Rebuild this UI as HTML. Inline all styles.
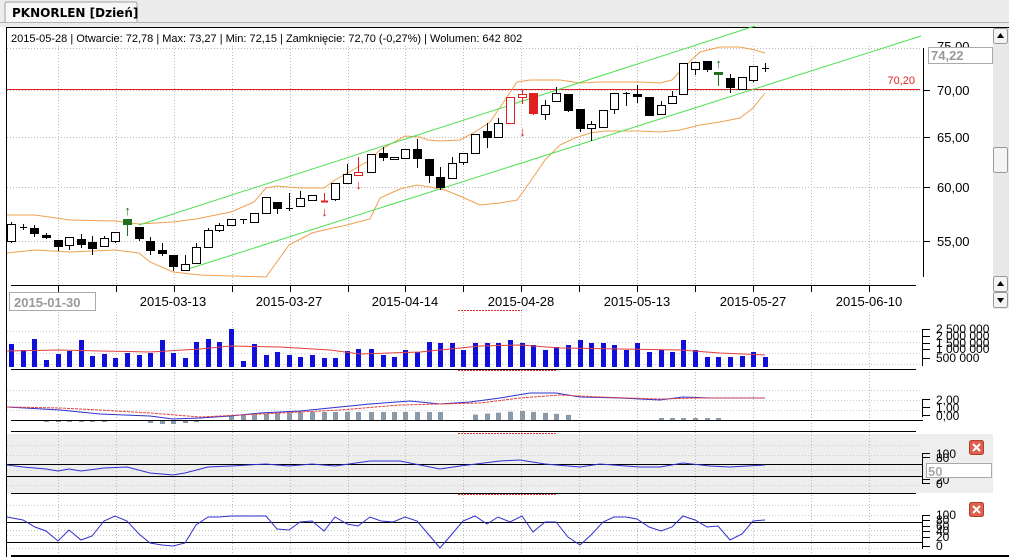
<!DOCTYPE html>
<html><head><meta charset="utf-8"><style>
html,body{margin:0;padding:0;width:1009px;height:557px;overflow:hidden;background:#fff;font-family:"Liberation Sans",sans-serif}
svg{position:absolute;left:0;top:0}
</style></head><body>
<svg id="s" width="1009" height="557" xmlns="http://www.w3.org/2000/svg" font-family="Liberation Sans, sans-serif">
<rect x="0" y="0" width="1009" height="27" fill="#ececec"/>
<path d="M5 22 V4 Q5 2 7 2 H135 Q137 2 137 4 V22" fill="#f7f7f7" stroke="#a0a0a0"/>
<text x="12" y="17" font-size="12" font-weight="bold" fill="#000" font-family="DejaVu Sans, sans-serif">PKNORLEN [Dzień]</text>
<line x1="0" y1="22.5" x2="1009" y2="22.5" stroke="#b0b0b0"/>
<rect x="6.5" y="27.5" width="1003" height="530" fill="#fff" stroke="#000"/>
<rect x="993" y="28" width="16" height="281" fill="#e8e8e8"/>
<rect x="7" y="434" width="986" height="59" fill="#eeeeee"/>
<g id="g"></g>
<text x="11" y="42" font-size="11" fill="#000">2015-05-28 | Otwarcie: 72,78 | Max: 73,27 | Min: 72,15 | Zamknięcie: 72,70 (-0,27%)  | Wolumen: 642 802</text>
</svg>
<script>
var g=document.getElementById('g'),h='';
function L(x1,y1,x2,y2,c,w,d){h+='<line x1="'+x1+'" y1="'+y1+'" x2="'+x2+'" y2="'+y2+'" stroke="'+c+'" stroke-width="'+(w||1)+'"'+(d?' stroke-dasharray="'+d+'"':'')+'/>';}
function P(pts,c,w,d){h+='<polyline fill="none" points="'+pts.map(p=>p.join(',')).join(' ')+'" stroke="'+c+'" stroke-width="'+(w||1)+'"'+(d?' stroke-dasharray="'+d+'"':'')+'/>';}
function T(x,y,t,s,c,a,b){h+='<text x="'+x+'" y="'+y+'" font-size="'+s+'" fill="'+(c||'#000')+'"'+(a?' text-anchor="'+a+'"':'')+(b?' font-weight="bold"':'')+'>'+t+'</text>';}
for(var x=58;x<920;x+=57.9){var xx=Math.round(x)+.5;L(xx,46,xx,284,'#bbb',1,'1 2');L(xx,312,xx,556,'#bbb',1,'1 2');}
[48,90,137,187,241].forEach(y=>L(7,y+.5,920,y+.5,'#bbb',1,'1 2'));
[331,342,353,364,390,400,410,445,455,470,485,505,515,530,535,548].forEach(y=>L(7,y+.5,920,y+.5,'#ccc',1,'1 2'));
L(7,89.5,920,89.5,'#e02020');T(915,84,'70,20',11,'#e02020','end');
L(923.5,48,923.5,277,'#000');
[[90,'70,00'],[137,'65,00'],[187,'60,00'],[241,'55,00']].forEach(a=>{L(923,a[0]+.5,930,a[0]+.5,'#000');T(937,a[0]+5,a[1],13);});
T(937,51,'75,00',13);
h+='<rect x="928.5" y="47.5" width="64" height="16" fill="#fff" stroke="#aaa"/>';T(931,60,'74,22',13,'#999',null,1);
L(11,285.5,916,285.5,'#000');
for(var x=58;x<920;x+=57.9)L(Math.round(x)+.5,285,Math.round(x)+.5,292,'#000');
h+='<rect x="9.5" y="292.5" width="86" height="18" fill="#fff" stroke="#aaa"/>';T(14,307,'2015-01-30',13,'#999',null,1);
[[173,'2015-03-13'],[289,'2015-03-27'],[405,'2015-04-14'],[521,'2015-04-28'],[637,'2015-05-13'],[753,'2015-05-27'],[869,'2015-06-10']].forEach(a=>T(a[0],306,a[1],13,'#000','middle'));
[310,370,433,494].forEach((y,i)=>L(458,y+.5,i?556:522,y+.5,'#e03030',1,'2 1'));
P([[7,215],[35,215],[70,220],[115,221],[139,224],[173,222],[196,219],[231,212],[254,202],[266,188],[277,186],[300,188],[324,188],[335,180],[358,167],[370,160],[380,150],[405,136],[420,137],[428,140],[440,141],[460,140],[475,132],[490,122],[505,100],[517,82],[530,80],[560,80],[580,83],[600,82],[640,82],[660,83],[672,80],[683,68],[700,52],[720,47],[740,47],[755,50],[765,53]],'#f0a050');
P([[7,253],[35,250],[70,252],[115,250],[139,253],[150,262],[173,272],[200,275],[231,276],[266,277],[289,245],[312,233],[324,230],[347,225],[358,222],[370,219],[380,198],[400,189],[417,185],[430,187],[445,190],[462,197],[480,205],[500,203],[517,200],[530,182],[545,160],[560,145],[575,138],[590,133],[605,131],[640,131],[660,132],[680,130],[700,125],[720,122],[740,118],[753,108],[765,93]],'#f0a050');
L(139,225,755,26,'#50e050');L(185,270,921,36,'#50e050');
var C=[[11,224,241,222,243,'w'],[23,227,227,224,230,'c'],[34,228,233,225,237,'b'],[46,235,237,233,239,'b'],[58,240,246,240,251,'b'],[69,237,245,237,250,'w'],[81,239,244,234,248,'b'],[92,242,248,236,255,'b'],[104,238,246,236,246,'w'],[115,232,241,232,243,'w'],[127,219,224,219,236,'g'],[139,227,238,227,241,'b'],[150,241,250,237,255,'b'],[162,250,253,243,256,'b'],[173,255,266,255,271,'b'],[185,264,270,255,270,'w'],[196,247,263,243,263,'w'],[208,230,247,228,247,'w'],[219,225,230,223,232,'w'],[231,219,225,219,225,'w'],[243,219,219,219,224,'c'],[254,213,222,213,222,'w'],[266,197,213,197,213,'w'],[277,202,208,202,214,'b'],[289,208,208,193,211,'c'],[300,198,206,191,206,'w'],[312,195,200,195,201,'w'],[324,201,201,193,202,'rc'],[335,183,199,183,201,'w'],[347,174,183,164,183,'w'],[358,172,175,157,175,'r'],[371,154,172,154,172,'w'],[383,153,157,147,161,'b'],[394,157,159,157,159,'w'],[405,149,158,149,158,'w'],[417,149,158,139,168,'b'],[429,159,175,159,183,'b'],[440,177,187,167,190,'b'],[452,163,178,157,178,'w'],[463,153,162,153,165,'w'],[475,134,153,134,153,'w'],[487,131,137,123,148,'b'],[498,123,137,118,137,'w'],[510,97,123,97,123,'r'],[522,94,97,89,104,'r'],[533,93,113,93,115,'R'],[545,105,114,100,120,'w'],[556,93,101,87,101,'w'],[568,94,110,94,112,'b'],[580,109,128,109,132,'b'],[591,124,128,121,141,'w'],[603,110,127,110,127,'w'],[614,93,109,93,114,'w'],[626,93,93,92,106,'c'],[637,94,96,85,103,'b'],[649,97,115,97,115,'b'],[661,105,114,101,114,'w'],[672,96,103,91,103,'w'],[683,63,94,63,94,'w'],[695,62,69,62,75,'w'],[707,61,69,61,72,'b'],[718,72,74,72,86,'g'],[730,78,87,74,93,'b'],[742,77,89,77,90,'w'],[753,66,80,66,82,'w'],[765,68,68,63,72,'c']];
C.forEach(c=>{var x=c[0],t=c[5],col=t=='g'?'#207020':(t=='r'||t=='R'||t=='rc')?'#e02020':'#000';
 L(x+.5,c[3],x+.5,c[4],col);
 if(t=='c'||t=='rc'){L(x-3,c[1]+.5,x+4,c[1]+.5,col,t=='rc'?2:1);}
 else{var fill=(t=='b')?'#000':t=='R'?'#e02020':t=='g'?'#207020':'#fff';h+='<rect x="'+(x-3.5)+'" y="'+(c[1]+.5)+'" width="8" height="'+Math.max(1,c[2]-c[1])+'" fill="'+fill+'" stroke="'+col+'"/>';}
});
[[127,215,'↑','#207020'],[718,68,'↑','#207020'],[324,216,'↓','#e02020'],[358,189,'↓','#e02020'],[522,136,'↓','#e02020']].forEach(a=>T(a[0]+.5,a[1],a[2],13,a[3],'middle'));
var V=[344,350,339,360,354,351,340,356,354,358,353,355,353,340,353,358,342,339,342,329,361,344,355,352,355,357,355,358,358,351,349,349,355,357,350,352,342,343,343,350,343,343,343,340,343,345,350,347,345,340,343,343,345,350,343,352,350,352,340,350,357,357,357,356,352,357];
V.forEach((v,i)=>{var x=C[i][0];h+='<rect x="'+(x-2)+'" y="'+v+'" width="5" height="'+(367-v)+'" fill="#1010d8"/>';});
P([[7,351],[60,350],[100,351],[150,352],[200,349],[231,346],[280,347],[330,350],[360,354],[420,352],[480,346],[520,345],[560,348],[620,349],[680,350],[720,353],[765,355]],'#e04040');
L(11,369.5,916,369.5,'#000');
[[333,'2 500 000'],[340,'2 000 000'],[347,'1 500 000'],[353,'1 000 000'],[362,'500 000']].forEach(a=>{L(922,a[0]-3.5,930,a[0]-3.5,'#000');T(936,a[0],a[1],12);});
L(922.5,330,922.5,366,'#000');
[[46,422],[58,422],[69,422],[81,422],[92,422],[104,422],[150,423],[162,424],[173,424],[185,423],[196,422]].forEach(a=>h+='<rect x="'+(a[0]-2)+'" y="420" width="5" height="'+(a[1]-420)+'" fill="#8a9aa8"/>');
C.forEach((c,i)=>{var x=c[0],v=0;if(x>=225&&x<=445)v=4+Math.min(4,(x-225)/20);if(x>=470&&x<=570)v=5+(x<520?(x-470)/12:(570-x)/12);if(x>=650&&x<=720)v=2;if(v)h+='<rect x="'+(x-2)+'" y="'+(420-v)+'" width="5" height="'+v+'" fill="#8a9aa8"/>';});
P([[7,407],[60,410],[100,414],[150,416],[173,419],[200,418],[230,416],[260,413],[300,411],[340,407],[370,404],[410,401],[440,404],[470,402],[500,398],[530,393],[556,393],[580,397],[620,398],[660,400],[683,397],[710,398],[765,398]],'#3030d0');
P([[7,407],[60,408],[100,410],[150,413],[200,417],[260,414],[340,410],[400,405],[440,404],[480,403],[520,398],[560,395],[600,397],[660,399],[700,398],[765,398]],'#e04040',1,'3 1');
L(11,420.5,923,420.5,'#000');L(11,431.5,916,431.5,'#000');
[[403,'2,00'],[411,'1,00'],[419,'0,00']].forEach(a=>{L(922,a[0]-3.5,930,a[0]-3.5,'#000');T(936,a[0]+1,a[1],12);});
L(922.5,399,922.5,417,'#000');
L(7,464.5,923,464.5,'#000');L(7,476.5,923,476.5,'#000');L(11,493.5,916,493.5,'#000');
P([[7,465],[23,467],[46,469],[58,471],[69,469],[81,471],[104,468],[127,467],[150,473],[173,475],[185,473],[208,467],[231,466],[266,464],[289,466],[312,464],[335,466],[370,461],[400,461],[430,467],[440,469],[460,466],[500,461],[520,460],[545,464],[580,467],[600,464],[640,467],[660,467],[683,463],[710,466],[730,467],[765,465]],'#3030d0');
L(922.5,453,922.5,484,'#000');
[[458,'100'],[462,'80'],[484,'20'],[488,'0']].forEach(a=>{L(922,a[0]-4.5,930,a[0]-4.5,'#000');T(936,a[0],a[1],12);});
h+='<rect x="926.5" y="463.5" width="65" height="14" fill="#fff" stroke="#aaa"/>';T(928,476,'50',13,'#aaa',null,1);
L(7,522.5,923,522.5,'#000');L(7,542.5,923,542.5,'#000');L(11,556,1009,556,'#000',2);
P([[7,517],[23,520],[35,527],[46,531],[58,541],[69,530],[81,540],[92,536],[104,521],[115,516],[127,521],[139,534],[150,543],[162,545],[173,546],[185,543],[196,525],[208,517],[219,517],[231,516],[266,516],[277,529],[289,530],[300,522],[312,521],[324,531],[335,517],[347,524],[358,526],[370,517],[381,521],[393,522],[405,517],[417,521],[429,535],[440,548],[452,534],[463,521],[475,516],[487,524],[498,517],[510,522],[522,516],[533,532],[545,522],[556,522],[568,537],[580,545],[591,535],[603,522],[614,517],[626,517],[637,519],[649,527],[661,531],[672,527],[683,516],[695,520],[707,527],[718,526],[730,540],[742,534],[753,521],[765,520]],'#3030d0');
L(922.5,516,922.5,549,'#000');
[[519,'100'],[524,'80'],[530,'60'],[535,'40'],[541,'20'],[550,'0']].forEach(a=>{L(922,a[0]-3.5,930,a[0]-3.5,'#000');T(936,a[0],a[1],12);});
[440,502].forEach(y=>{h+='<rect x="969.5" y="'+(y+.5)+'" width="14" height="14" rx="2" fill="#e06050" stroke="#b04030"/>';L(973,y+4,980,y+11,'#fff',2);L(980,y+4,973,y+11,'#fff',2);});
function btn(y,up){h+='<rect x="993.5" y="'+(y+.5)+'" width="14" height="15" rx="2" fill="#f4f4f4" stroke="#999"/>';h+='<path d="'+(up?'M997 '+(y+10)+' L1004 '+(y+10)+' L1000.5 '+(y+5)+'Z':'M997 '+(y+6)+' L1004 '+(y+6)+' L1000.5 '+(y+11)+'Z')+'" fill="#000"/>';}
btn(28,1);btn(276,1);btn(292,0);
h+='<rect x="993.5" y="147.5" width="14" height="25" rx="2" fill="#f4f4f4" stroke="#999"/>';
g.innerHTML=h;
</script>
</body></html>
